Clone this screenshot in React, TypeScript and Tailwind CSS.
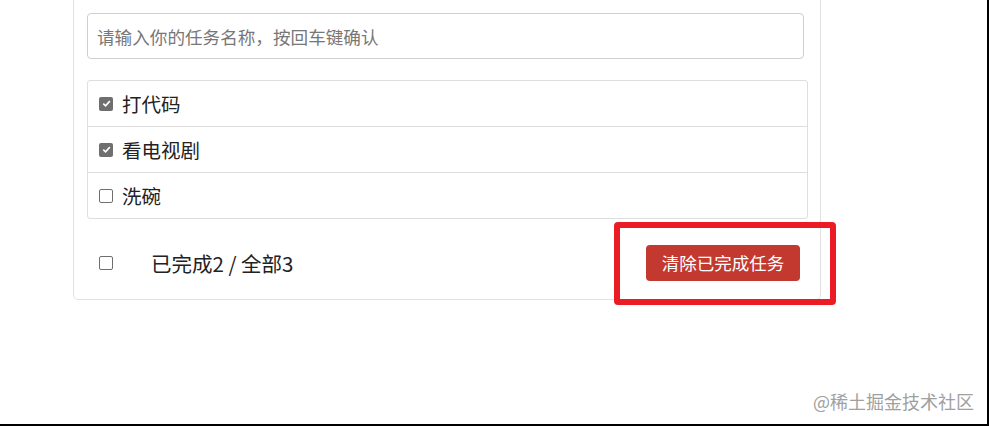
import React from "react";

const font = { fontFamily: '"Noto Sans CJK SC", "Noto Sans", sans-serif' };

type Todo = { id: number; name: string; done: boolean };

const todos: Todo[] = [
  { id: 1, name: "打代码", done: true },
  { id: 2, name: "看电视剧", done: true },
  { id: 3, name: "洗碗", done: false },
];

function Check({ checked }: { checked: boolean }) {
  return checked ? (
    <span className="flex h-[14px] w-[14px] shrink-0 items-center justify-center rounded-[2px] bg-[#6f6f6f]">
      <svg viewBox="0 0 12 12" className="h-[11px] w-[11px]" fill="none" stroke="white" strokeWidth="1.8">
        <path d="M2.5 6.2 L5 8.6 L9.6 3.4" />
      </svg>
    </span>
  ) : (
    <span className="block h-[14px] w-[14px] shrink-0 rounded-[2px] border border-[#6f6f6f] bg-white" />
  );
}

export default function App() {
  return (
    <div
      className="relative h-[426px] w-[989px] overflow-hidden border-r-2 border-b-2 border-black bg-white text-[#222]"
      style={font}
    >
      <div className="ml-[73px] w-[748px] rounded-b-[5px] border border-t-0 border-[#e2e2e2] pl-[13px] pt-[13px] pb-[18px]">
        <input
          placeholder="请输入你的任务名称，按回车键确认"
          className="h-[46px] w-[717px] rounded-[4px] border border-[#cfcfcf] px-[9px] text-[17.6px] outline-none placeholder:text-[#777]"
          style={font}
          readOnly
        />
        <ul className="mt-[21px] w-[721px] rounded-[3px] border border-[#dedede]">
          {todos.map((t, i) => (
            <li
              key={t.id}
              className={`flex items-center gap-[9px] pl-[11px] text-[19.5px] ${i > 0 ? "h-[46px] border-t border-[#dedede]" : "h-[45px]"}`}
            >
              <Check checked={t.done} />
              <span>{t.name}</span>
            </li>
          ))}
        </ul>
        <div className="mt-[26px] flex h-[36px] w-[713px] items-center justify-between">
          <div className="flex items-center pl-[12px]">
            <Check checked={false} />
            <span className="ml-[38px] text-[20.5px]">已完成2 / 全部3</span>
          </div>
          <button
            className="h-[36px] w-[154px] rounded-[4px] bg-[#c3382f] text-[17.5px] text-white"
            style={font}
          >
            清除已完成任务
          </button>
        </div>
      </div>

      {/* annotation box */}
      <div className="absolute left-[614px] top-[222px] h-[83px] w-[222px] rounded-[4px] border-[6px] border-[#ea1d25]" />

      <div className="absolute left-[813px] top-[388px] text-[18px] text-[#a0a0a0]">@稀土掘金技术社区</div>
    </div>
  );
}
